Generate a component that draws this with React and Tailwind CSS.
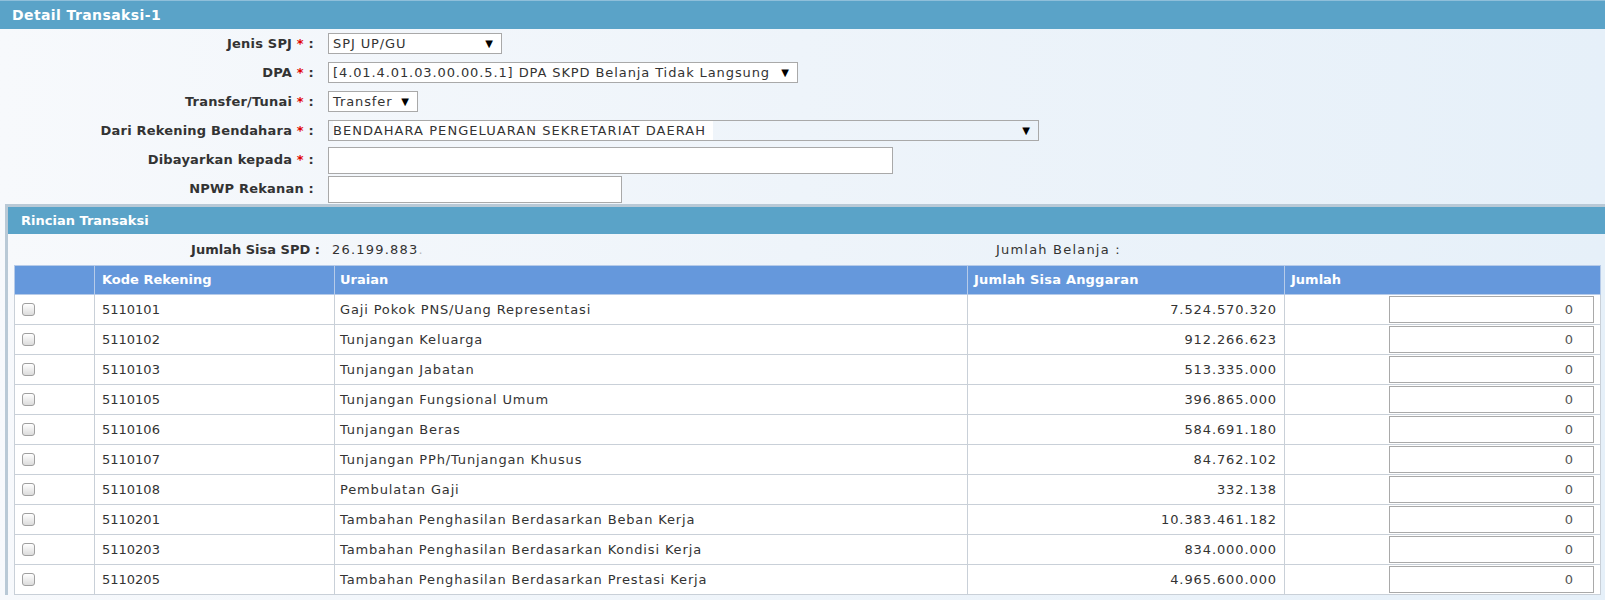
const rows = [
  { kode: '5110101', uraian: 'Gaji Pokok PNS/Uang Representasi', sisa: '7.524.570.320' },
  { kode: '5110102', uraian: 'Tunjangan Keluarga', sisa: '912.266.623' },
  { kode: '5110103', uraian: 'Tunjangan Jabatan', sisa: '513.335.000' },
  { kode: '5110105', uraian: 'Tunjangan Fungsional Umum', sisa: '396.865.000' },
  { kode: '5110106', uraian: 'Tunjangan Beras', sisa: '584.691.180' },
  { kode: '5110107', uraian: 'Tunjangan PPh/Tunjangan Khusus', sisa: '84.762.102' },
  { kode: '5110108', uraian: 'Pembulatan Gaji', sisa: '332.138' },
  { kode: '5110201', uraian: 'Tambahan Penghasilan Berdasarkan Beban Kerja', sisa: '10.383.461.182' },
  { kode: '5110203', uraian: 'Tambahan Penghasilan Berdasarkan Kondisi Kerja', sisa: '834.000.000' },
  { kode: '5110205', uraian: 'Tambahan Penghasilan Berdasarkan Prestasi Kerja', sisa: '4.965.600.000' },
];

function Label({ text, required }) {
  return (
    <div className="w-[314px] shrink-0 text-right font-bold tracking-[0.2px]">
      {text}
      {required && <span className="text-[#e00000]"> *</span>} :
    </div>
  );
}

function FakeSelect({ value, width, plain }) {
  return (
    <div
      className={`ml-[14px] flex h-[21px] items-center justify-between border border-[#a9a9a9] pl-[4px] pr-[8px] ${width} ${
        plain ? 'bg-transparent' : 'bg-white'
      }`}
    >
      <span className={plain ? 'bg-white pr-[7px] tracking-[1.05px]' : 'tracking-[0.9px]'}>{value}</span>
      <span className="text-[10px] text-black">▼</span>
    </div>
  );
}

function Checkbox() {
  return (
    <span className="block h-[13px] w-[13px] rounded-[3px] border border-[#a0a0a0] bg-gradient-to-b from-white to-[#dcdcdc]" />
  );
}

export default function App() {
  return (
    <div className="min-h-[600px] w-full overflow-hidden bg-gradient-to-r from-[#f7f9fc] via-[#eef4fa] to-[#e6f0f9] font-['DejaVu_Sans',sans-serif] text-[13px] text-[#333]">
      <div className="flex h-[29px] items-center border-t border-[#8fbfda] bg-[#5aa3c8] pl-[12px] text-[14px] font-bold tracking-[0.4px] text-white">
        Detail Transaksi-1
      </div>

      <div className="flex h-[29px] items-center">
        <Label text="Jenis SPJ" required />
        <FakeSelect value="SPJ UP/GU" width="w-[174px]" />
      </div>
      <div className="flex h-[29px] items-center">
        <Label text="DPA" required />
        <FakeSelect value="[4.01.4.01.03.00.00.5.1] DPA SKPD Belanja Tidak Langsung" width="w-[470px]" />
      </div>
      <div className="flex h-[29px] items-center">
        <Label text="Transfer/Tunai" required />
        <FakeSelect value="Transfer" width="w-[90px]" />
      </div>
      <div className="flex h-[29px] items-center">
        <Label text="Dari Rekening Bendahara" required />
        <FakeSelect value="BENDAHARA PENGELUARAN SEKRETARIAT DAERAH" width="w-[711px]" plain />
      </div>
      <div className="flex h-[30px] items-center">
        <Label text="Dibayarkan kepada" required />
        <div className="ml-[14px] h-[27px] w-[565px] border border-[#a9a9a9] bg-white" />
      </div>
      <div className="flex h-[28px] items-center">
        <Label text="NPWP Rekanan" />
        <div className="ml-[14px] h-[27px] w-[294px] border border-[#a9a9a9] bg-white" />
      </div>

      <div className="ml-[5px] mt-px border-l-[3px] border-t-[3px] border-[#b9c9d6]">
        <div className="flex h-[27px] items-center bg-[#5aa3c8] pl-[13px] font-bold text-white">Rincian Transaksi</div>

        <div className="flex h-[31px] items-center">
          <div className="w-[312px] shrink-0 text-right font-bold">Jumlah Sisa SPD :</div>
          <div className="ml-[12px] w-[664px] shrink-0 tracking-[1.2px]">
            26.199.883<span className="text-[#bbb]">.</span>
          </div>
          <div className="tracking-[1.2px]">Jumlah Belanja :</div>
        </div>

        <div className="pl-[6px]">
          <table className="w-[1587px] border-collapse">
            <thead>
              <tr className="h-[29px] bg-[#6598dc] text-left font-bold text-white">
                <th className="w-[80px] border border-[#b6cbe9]"></th>
                <th className="w-[240px] border border-[#b6cbe9] px-[7px]">Kode Rekening</th>
                <th className="w-[633px] border border-[#b6cbe9] px-[5px]">Uraian</th>
                <th className="w-[317px] border border-[#b6cbe9] px-[6px] tracking-[0.2px]">Jumlah Sisa Anggaran</th>
                <th className="border border-[#b6cbe9] px-[6px]">Jumlah</th>
              </tr>
            </thead>
            <tbody>
              {rows.map((row) => (
                <tr key={row.kode} className="h-[30px] bg-white">
                  <td className="border border-[#c9d0d8] pl-[7px]">
                    <Checkbox />
                  </td>
                  <td className="border border-[#c9d0d8] px-[7px]">{row.kode}</td>
                  <td className="border border-[#c9d0d8] px-[5px] tracking-[0.85px]">{row.uraian}</td>
                  <td className="border border-[#c9d0d8] px-[7px] text-right tracking-[0.9px]">{row.sisa}</td>
                  <td className="border border-[#c9d0d8] px-[6px]">
                    <div className="ml-auto flex h-[27px] w-[205px] items-center justify-end border border-[#a9a9a9] bg-white pr-[20px] text-[#555]">
                      0
                    </div>
                  </td>
                </tr>
              ))}
            </tbody>
          </table>
        </div>
      </div>
    </div>
  );
}
